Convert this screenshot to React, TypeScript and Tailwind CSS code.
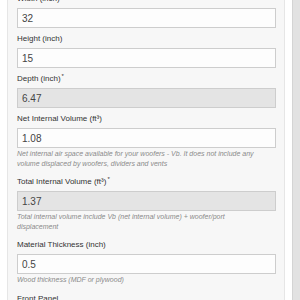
import React from 'react';

type Field = {
  label: string;
  value: string;
  star?: boolean;
  readOnly?: boolean;
  help?: string;
};

const fields: Field[] = [
  { label: 'Width (inch)', value: '32' },
  { label: 'Height (inch)', value: '15' },
  { label: 'Depth (inch)', value: '6.47', star: true, readOnly: true },
  {
    label: 'Net Internal Volume (ft³)',
    value: '1.08',
    help: 'Net internal air space available for your woofers - Vb. It does not include any volume displaced by woofers, dividers and vents',
  },
  {
    label: 'Total Internal Volume (ft³)',
    value: '1.37',
    star: true,
    readOnly: true,
    help: 'Total internal volume include Vb (net internal volume) + woofer/port displacement',
  },
  {
    label: 'Material Thickness (inch)',
    value: '0.5',
    help: 'Wood thickness (MDF or plywood)',
  },
];

const FormGroup = ({ f }: { f: Field }) => (
  <div className={f.help ? 'mb-[8px]' : 'mb-[5px]'}>
    <label className="block h-[12px] leading-[12px] text-[8px] text-[#333] mb-[3px]">
      {f.label}
      {f.star && <sup className="text-[6px] ml-[1px]">*</sup>}
    </label>
    <div
      className={
        'h-[20px] border border-[#cdcdcd] flex items-center pl-[4px] text-[10px] text-[#444] ' +
        (f.readOnly ? 'bg-[#e4e4e4]' : 'bg-[#fdfdfd]')
      }
    >
      {f.value}
    </div>
    {f.help && (
      <p className="mt-[1px] text-[7px] leading-[9.5px] italic text-[#8a8a8a] pr-[10px]">{f.help}</p>
    )}
  </div>
);

const App: React.FC = () => {
  return (
    <div className="w-[300px] h-[300px] overflow-hidden bg-white flex font-['Liberation_Sans',Arial,sans-serif]">
      <div className="w-[7px] shrink-0 bg-white" />
      <div className="flex-1 bg-[#f7f7f7] border-l border-r border-[#e6e6e6] pl-[9px] pr-[8px]">
        <div className="mt-[-7px]">
          {fields.map((f) => (
            <FormGroup key={f.label} f={f} />
          ))}
          <div className="h-[12px] leading-[12px] text-[8px] text-[#333]">Front Panel</div>
        </div>
      </div>
      <div className="w-[7px] shrink-0 bg-white" />
      <div className="w-[8px] shrink-0 bg-[#e2e2e2] border-l border-[#d4d4d4]" />
    </div>
  );
};

export default App;
